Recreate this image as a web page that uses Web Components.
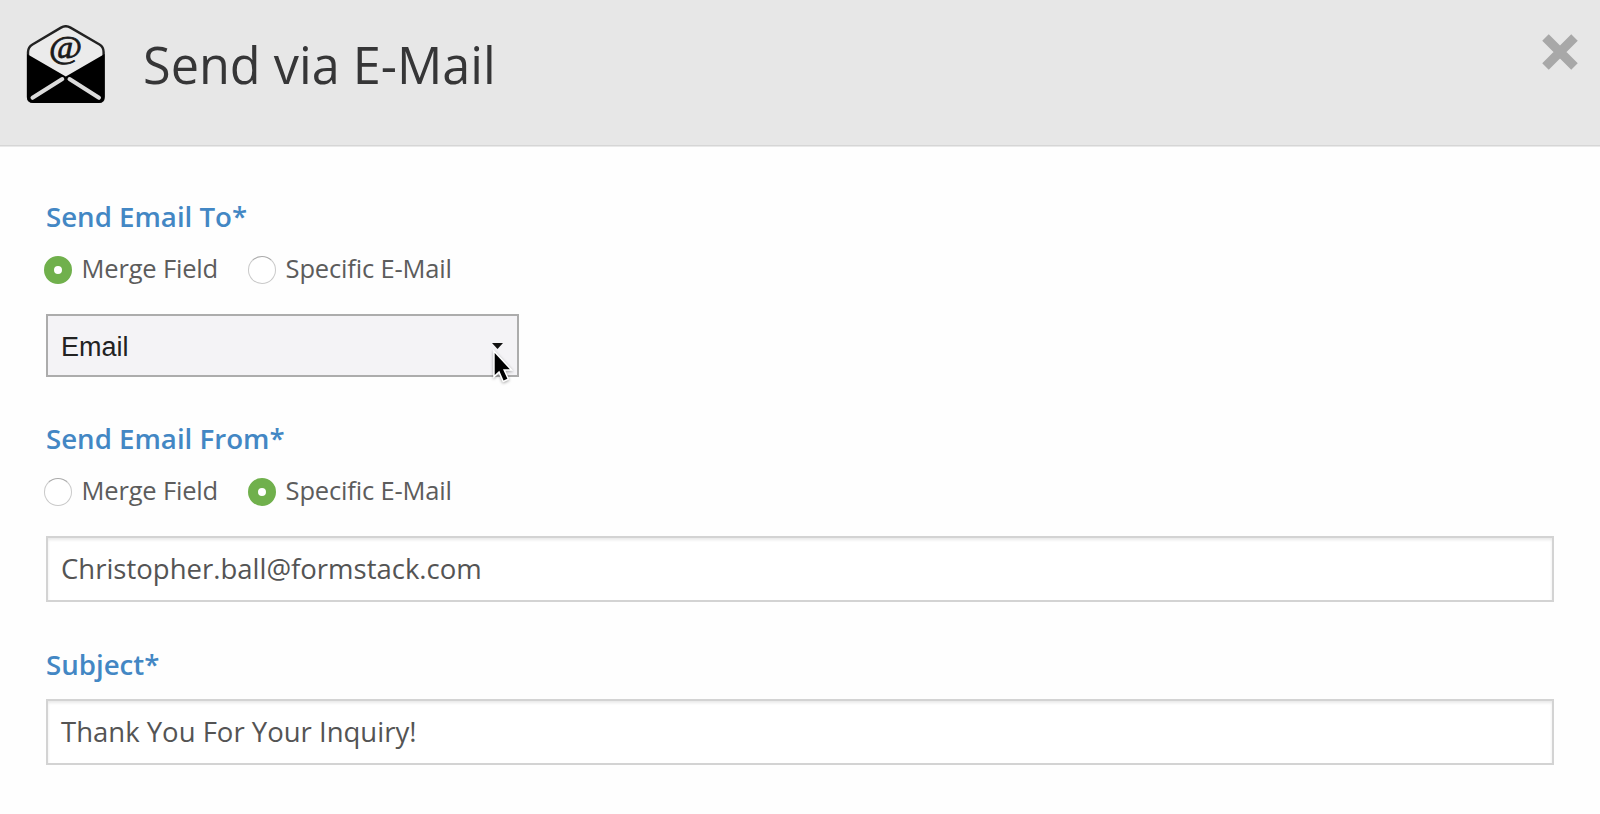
<!DOCTYPE html>
<html lang="en">
<head>
<meta charset="utf-8">
<title>Send via E-Mail</title>
<style>
    html, body {
        margin: 0;
        height: 100%;
        background: #fefefe;
        overflow: hidden;
    }

    body {
        font-family: "Open Sans", "Noto Sans", sans-serif;
    }
</style>
</head>
<body>
<mail-dialog>
    <dialog-header slot="header">Send via E-Mail</dialog-header>

    <form-field label="Send Email To*">
        <radio-group slot="choice">
            <radio-option checked>Merge Field</radio-option>
            <radio-option>Specific E-Mail</radio-option>
        </radio-group>
        <select-box>Email</select-box>
    </form-field>

    <form-field label="Send Email From*">
        <radio-group slot="choice">
            <radio-option>Merge Field</radio-option>
            <radio-option checked>Specific E-Mail</radio-option>
        </radio-group>
        <text-box>Christopher.ball@formstack.com</text-box>
    </form-field>

    <form-field label="Subject*" compact>
        <text-box>Thank You For Your Inquiry!</text-box>
    </form-field>
</mail-dialog>

<script>
/* ---------- Dialog ---------- */
class MailDialog extends HTMLElement {
    constructor() {
        super();
        this.attachShadow({mode: 'open'}).innerHTML = `<style>
        :host {
            display: flex;
            flex-direction: column;
            height: 814px;
        }

        .body {
            display: flex;
            flex-direction: column;
            gap: 42px;
            padding: 51px 46px 0;
        }
        </style>
        <slot name="header"></slot>
        <div class="body"><slot></slot></div>`;
    }
}

/* ---------- Header: icon, title and close button ---------- */
class DialogHeader extends HTMLElement {
    constructor() {
        super();
        this.attachShadow({mode: 'open'}).innerHTML = `<style>
        :host {
            display: flex;
            align-items: flex-start;
            box-sizing: border-box;
            height: 146px;
            padding: 25px 21px 0 26px;
            background: #e7e7e7;
            border-bottom: 1px solid #d6d6d6;
            box-shadow: 0 1px 0 #e9e9e9;
        }

        .mail {
            width: 80px;
            height: 80px;
        }

        h1 {
            flex: 1;
            margin: 11px 0 0 37px;
            font-size: 50.4px;
            line-height: 58px;
            font-weight: 400;
            color: #363637;
        }

        button {
            display: block;
            margin: 8px 0 0;
            padding: 0;
            border: none;
            background: none;
        }

        button svg {
            display: block;
            width: 38px;
            height: 38px;
        }
        </style>
        <svg class="mail" viewBox="0 0 80 80">
            <path d="M2 72V27Q2.2 22 6.5 19.5L35 2.6Q39.7 -0.2 44.5 2.6L73.5 19.5Q77.6 22 77.6 27V72Q77.6 76.8 73 76.8H7Q2 76.8 2 72Z" fill="#ebebeb" stroke="#222" stroke-width="2.4"/>
            <path d="M1 29L39.8 51.5L78.6 29V71.5Q78.6 78 72.5 78H7.5Q1 78 1 71.5Z" fill="#000"/>
            <path d="M36.3 54L6.5 72.8M43.5 54L73 72.8" fill="none" stroke="#dcdcdc" stroke-width="4" stroke-linecap="round"/>
            <text transform="translate(39.6 33.4) scale(1 0.9)" text-anchor="middle" font-family="Liberation Serif" font-size="36" fill="#1a1a1a" stroke="#1a1a1a" stroke-width="0.9">@</text>
        </svg>
        <h1><slot></slot></h1>
        <button aria-label="Close">
            <svg viewBox="0 0 38 38"><path d="M4.5 4.5L33.5 33.5M33.5 4.5L4.5 33.5" stroke="#a8a8a8" stroke-width="9.2"/></svg>
        </button>`;
    }
}

/* ---------- Label, optional radio row and control ---------- */
class FormField extends HTMLElement {
    constructor() {
        super();
        this.attachShadow({mode: 'open'}).innerHTML = `<style>
        :host {
            display: flex;
            flex-direction: column;
        }

        label {
            font-size: 27.65px;
            line-height: 38px;
            font-weight: 600;
            color: #4387c4;
        }

        .choice {
            margin: 19px 0 32px -2px;
        }

        :host([compact]) {
            margin-top: 1px;
        }

        :host([compact]) .choice {
            margin: 16px 0 0;
        }
        </style>
        <label></label>
        <div class="choice"><slot name="choice"></slot></div>
        <slot></slot>`;
    }

    connectedCallback() {
        this.shadowRoot.querySelector('label').textContent = this.getAttribute('label');
    }
}

class RadioGroup extends HTMLElement {
    constructor() {
        super();
        this.attachShadow({mode: 'open'}).innerHTML = `<style>
        :host {
            display: flex;
            gap: 30px;
            height: 28px;
        }
        </style>
        <slot></slot>`;
    }
}

class RadioOption extends HTMLElement {
    constructor() {
        super();
        this.attachShadow({mode: 'open'}).innerHTML = `<style>
        :host {
            display: flex;
            gap: 9.5px;
            font-size: 25.5px;
            letter-spacing: -0.17px;
            line-height: 28px;
            color: #5c5c5c;
            white-space: nowrap;
        }

        .dot {
            box-sizing: border-box;
            width: 28px;
            height: 28px;
            margin-top: 2px;
            border: 1.5px solid #c9c9c9;
            border-top-color: #aaa;
            border-radius: 50%;
            background: #fff;
        }

        :host([checked]) .dot {
            border: 10px solid #70b04c;
        }
        </style>
        <span class="dot"></span>
        <span><slot></slot></span>`;
    }
}

/* ---------- Controls ---------- */
class TextBox extends HTMLElement {
    constructor() {
        super();
        this.attachShadow({mode: 'open'}).innerHTML = `<style>
        :host {
            display: flex;
            align-items: center;
            box-sizing: border-box;
            height: 66px;
            padding: 0 13px 2px;
            border: 2px solid #d3d3d3;
            background: #fff;
            box-shadow: inset 0 2px 3px rgba(0, 0, 0, 0.09);
            font-size: 27.5px;
            color: #545454;
        }
        </style>
        <span><slot></slot></span>`;
    }
}

class SelectBox extends HTMLElement {
    constructor() {
        super();
        this.attachShadow({mode: 'open'}).innerHTML = `<style>
        :host {
            display: flex;
            position: relative;
            align-items: center;
            justify-content: space-between;
            box-sizing: border-box;
            width: 473px;
            height: 63px;
            padding: 3px 14px 0 13px;
            border: 2px solid #acacac;
            background: #f4f3f6;
            font-family: "Liberation Sans", Arial, sans-serif;
            font-size: 27px;
            color: #222;
        }

        .arrow {
            width: 11px;
            height: 6px;
            margin-bottom: 3px;
        }

        /* Mouse pointer resting over the arrow */
        .pointer {
            position: absolute;
            left: 442px;
            top: 33px;
            width: 24px;
            height: 38px;
            filter: drop-shadow(0 1px 1.5px rgba(0, 0, 0, 0.35));
        }
        </style>
        <span><slot></slot></span>
        <svg class="arrow" viewBox="0 0 11 6"><path d="M0 0H11L5.5 6Z" fill="#111"/></svg>
        <svg class="pointer" viewBox="0 0 24 38">
            <path d="M4.7 4V26L9.3 21.8L13.6 31.5L17.4 29.7L13 20.2H19.8Z" fill="#000" stroke="#fff" stroke-width="3" paint-order="stroke"/>
        </svg>`;
    }
}

customElements.define('mail-dialog', MailDialog);
customElements.define('dialog-header', DialogHeader);
customElements.define('form-field', FormField);
customElements.define('radio-group', RadioGroup);
customElements.define('radio-option', RadioOption);
customElements.define('text-box', TextBox);
customElements.define('select-box', SelectBox);
</script>
</body>
</html>
